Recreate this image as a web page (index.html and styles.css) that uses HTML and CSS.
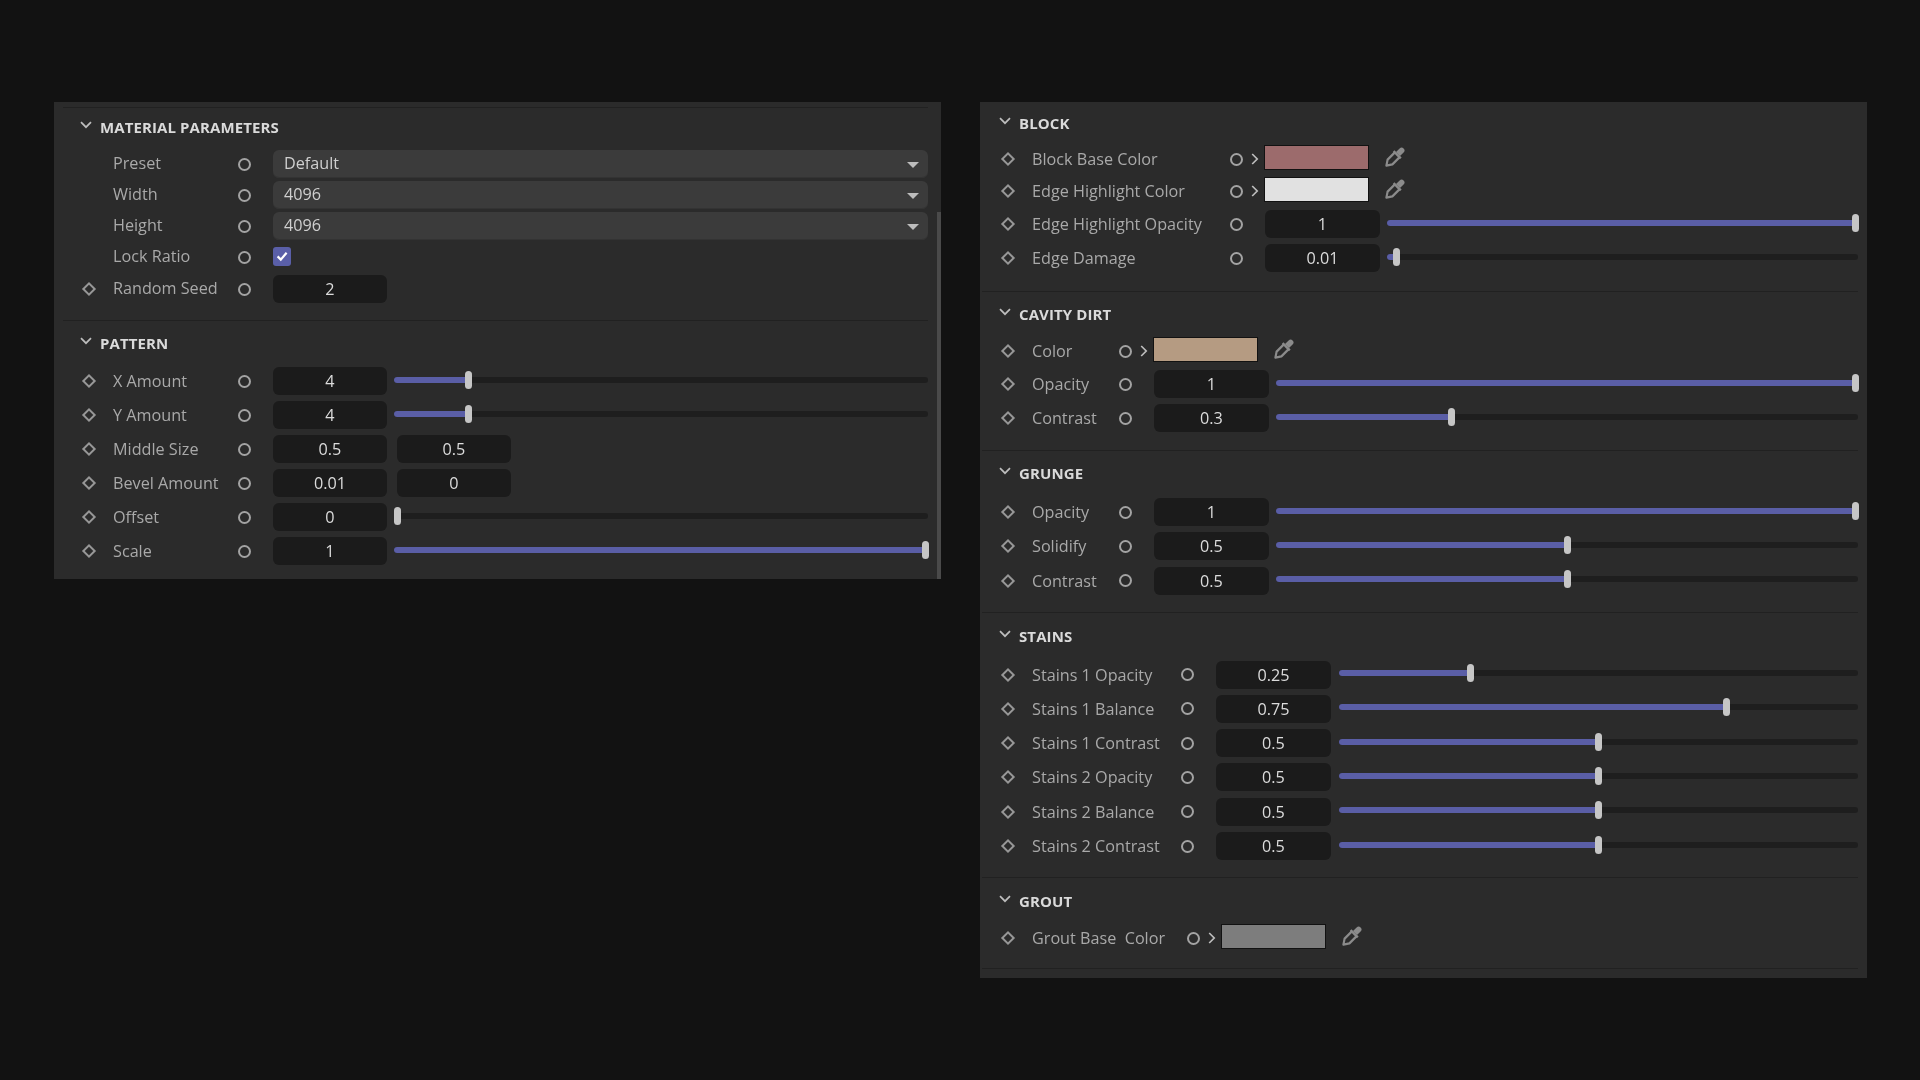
FILE: index.html
```html
<!DOCTYPE html>
<html lang="en">
<head>
<meta charset="utf-8">
<title>Material Parameters</title>
<link rel="stylesheet" href="styles.css">
</head>
<body>
<svg class="defs" width="0" height="0" aria-hidden="true">
  <symbol id="chev" viewBox="0 0 12 8"><path d="M1 1.2 6 6.2 11 1.2" fill="none" stroke="currentColor" stroke-width="1.7"/></symbol>
  <symbol id="drop" viewBox="0 0 20 20">
    <path d="M9.6 5.6 2.6 12.6 1.4 18.6 7.4 17.4 14.4 10.4" fill="none" stroke="currentColor" stroke-width="2.2" stroke-linejoin="round"/>
    <path d="M8.6 4.2 15.8 11.4" fill="none" stroke="currentColor" stroke-width="2.4"/>
    <path d="M11 5 14.6 1.4a2.8 2.8 0 0 1 4 4L15 9z" fill="currentColor"/>
  </symbol>
</svg>
<main class="stage">
  <section class="panel panel-left">
    <div class="section sec-material">
      <div class="head"><svg class="chev"><use href="#chev"/></svg><h2>Material Parameters</h2></div>
      <div class="rows rows-tight">
        <div class="row"><i class="dia off"></i><span class="label">Preset</span><i class="dot"></i><div class="select">Default<b class="caret"></b></div></div>
        <div class="row"><i class="dia off"></i><span class="label">Width</span><i class="dot"></i><div class="select">4096<b class="caret"></b></div></div>
        <div class="row"><i class="dia off"></i><span class="label">Height</span><i class="dot"></i><div class="select">4096<b class="caret"></b></div></div>
        <div class="row"><i class="dia off"></i><span class="label">Lock Ratio</span><i class="dot"></i><div class="check"><svg viewBox="0 0 18 18" width="18" height="18"><path d="M4.6 9.4 7.8 12.6 13.6 5.8" fill="none" stroke="#fff" stroke-width="2.2"/></svg></div></div>
        <div class="row row-seed"><i class="dia"></i><span class="label">Random Seed</span><i class="dot"></i><div class="field">2</div></div>
      </div>
    </div>
    <div class="section sec-pattern">
      <div class="head"><svg class="chev"><use href="#chev"/></svg><h2>Pattern</h2></div>
      <div class="rows">
        <div class="row"><i class="dia"></i><span class="label">X Amount</span><i class="dot"></i><div class="field">4</div><div class="slider" style="--v:.136"><u></u><s></s></div></div>
        <div class="row"><i class="dia"></i><span class="label">Y Amount</span><i class="dot"></i><div class="field">4</div><div class="slider" style="--v:.136"><u></u><s></s></div></div>
        <div class="row"><i class="dia"></i><span class="label">Middle Size</span><i class="dot"></i><div class="field">0.5</div><div class="field field-2">0.5</div></div>
        <div class="row"><i class="dia"></i><span class="label">Bevel Amount</span><i class="dot"></i><div class="field">0.01</div><div class="field field-2">0</div></div>
        <div class="row"><i class="dia"></i><span class="label">Offset</span><i class="dot"></i><div class="field">0</div><div class="slider" style="--v:0"><u></u><s></s></div></div>
        <div class="row"><i class="dia"></i><span class="label">Scale</span><i class="dot"></i><div class="field">1</div><div class="slider" style="--v:1"><u></u><s></s></div></div>
      </div>
    </div>
    <i class="scrollbar"></i>
  </section>

  <section class="panel panel-right">
    <div class="section sec-block">
      <div class="head"><svg class="chev"><use href="#chev"/></svg><h2>Block</h2></div>
      <div class="rows">
        <div class="row row-swatch"><i class="dia"></i><span class="label">Block Base Color</span><i class="dot"></i><svg class="more"><use href="#chev"/></svg><div class="swatch swatch-rose"></div><svg class="picker"><use href="#drop"/></svg></div>
        <div class="row row-swatch"><i class="dia"></i><span class="label">Edge Highlight Color</span><i class="dot"></i><svg class="more"><use href="#chev"/></svg><div class="swatch swatch-white"></div><svg class="picker"><use href="#drop"/></svg></div>
        <div class="row row-after-swatch"><i class="dia"></i><span class="label">Edge Highlight Opacity</span><i class="dot"></i><div class="field">1</div><div class="slider" style="--v:1"><u></u><s></s></div></div>
        <div class="row"><i class="dia"></i><span class="label">Edge Damage</span><i class="dot"></i><div class="field">0.01</div><div class="slider" style="--v:.013"><u></u><s></s></div></div>
      </div>
    </div>
    <div class="section sec-cavity">
      <div class="head"><svg class="chev"><use href="#chev"/></svg><h2>Cavity Dirt</h2></div>
      <div class="rows">
        <div class="row row-swatch"><i class="dia"></i><span class="label">Color</span><i class="dot"></i><svg class="more"><use href="#chev"/></svg><div class="swatch swatch-tan"></div><svg class="picker"><use href="#drop"/></svg></div>
        <div class="row row-after-swatch"><i class="dia"></i><span class="label">Opacity</span><i class="dot"></i><div class="field">1</div><div class="slider" style="--v:1"><u></u><s></s></div></div>
        <div class="row"><i class="dia"></i><span class="label">Contrast</span><i class="dot"></i><div class="field">0.3</div><div class="slider" style="--v:.3"><u></u><s></s></div></div>
      </div>
    </div>
    <div class="section sec-grunge">
      <div class="head"><svg class="chev"><use href="#chev"/></svg><h2>Grunge</h2></div>
      <div class="rows rows-wide">
        <div class="row"><i class="dia"></i><span class="label">Opacity</span><i class="dot"></i><div class="field">1</div><div class="slider" style="--v:1"><u></u><s></s></div></div>
        <div class="row"><i class="dia"></i><span class="label">Solidify</span><i class="dot"></i><div class="field">0.5</div><div class="slider" style="--v:.5"><u></u><s></s></div></div>
        <div class="row"><i class="dia"></i><span class="label">Contrast</span><i class="dot"></i><div class="field">0.5</div><div class="slider" style="--v:.5"><u></u><s></s></div></div>
      </div>
    </div>
    <div class="section sec-stains">
      <div class="head"><svg class="chev"><use href="#chev"/></svg><h2>Stains</h2></div>
      <div class="rows rows-wide">
        <div class="row"><i class="dia"></i><span class="label">Stains 1 Opacity</span><i class="dot"></i><div class="field">0.25</div><div class="slider" style="--v:.25"><u></u><s></s></div></div>
        <div class="row"><i class="dia"></i><span class="label">Stains 1 Balance</span><i class="dot"></i><div class="field">0.75</div><div class="slider" style="--v:.75"><u></u><s></s></div></div>
        <div class="row"><i class="dia"></i><span class="label">Stains 1 Contrast</span><i class="dot"></i><div class="field">0.5</div><div class="slider" style="--v:.5"><u></u><s></s></div></div>
        <div class="row"><i class="dia"></i><span class="label">Stains 2 Opacity</span><i class="dot"></i><div class="field">0.5</div><div class="slider" style="--v:.5"><u></u><s></s></div></div>
        <div class="row"><i class="dia"></i><span class="label">Stains 2 Balance</span><i class="dot"></i><div class="field">0.5</div><div class="slider" style="--v:.5"><u></u><s></s></div></div>
        <div class="row"><i class="dia"></i><span class="label">Stains 2 Contrast</span><i class="dot"></i><div class="field">0.5</div><div class="slider" style="--v:.5"><u></u><s></s></div></div>
      </div>
    </div>
    <div class="section sec-grout">
      <div class="head"><svg class="chev"><use href="#chev"/></svg><h2>Grout</h2></div>
      <div class="rows">
        <div class="row row-swatch"><i class="dia"></i><span class="label">Grout Base&nbsp; Color</span><i class="dot"></i><svg class="more"><use href="#chev"/></svg><div class="swatch swatch-grey"></div><svg class="picker"><use href="#drop"/></svg></div>
      </div>
    </div>
    <div class="section sec-end"></div>
  </section>
</main>
</body>
</html>
```
FILE: styles.css
```css
* { box-sizing: border-box; }
html, body { margin: 0; height: 100%; }
body {
  background: #121212;
  color: #a9a9a9;
  font-family: "Open Sans", "Noto Sans", "Liberation Sans", sans-serif;
  font-size: 16.2px;
  overflow: hidden;
}
.defs { position: absolute; }
.stage {
  display: flex;
  align-items: flex-start;
  gap: 39px;
  padding: 102px 0 0 54px;
  filter: blur(0.4px);
}
.panel {
  position: relative;
  width: 887px;
  background: #2b2b2b;
}
.panel-left { height: 477px; padding: 5px 13px 0 9px; }
.panel-right { height: 876px; padding: 0 9px 0 2px; }
.scrollbar {
  position: absolute;
  top: 110px;
  right: 0;
  bottom: 0;
  width: 4px;
  background: #4a4a4a;
}

/* sections */
.section { --label: 125px; border-top: 1px solid #212121; padding: 3px 0 18px; }
.sec-material { padding: 0 0 17px; }
.sec-material .head { margin-bottom: 4px; }
.sec-material .label { line-height: 27.5px; }
.sec-pattern { padding-bottom: 14px; }
.sec-pattern .head { margin-bottom: 5px; }
.sec-block { --label: 198px; border-top: 0; padding: 2px 0 19px; }
.sec-block .head { margin-bottom: 3px; }
.sec-cavity { --label: 87px; }
.sec-cavity .head { margin-bottom: 4px; }
.sec-grunge { --label: 87px; padding-bottom: 17px; }
.sec-stains { --label: 149px; padding: 4px 0 17px; }
.sec-stains .slider { margin-left: 8px; }
.sec-grout { --label: 155px; padding: 4px 0 18px; }
.sec-grout .head { margin-bottom: 4px; }
.sec-end { padding: 0; }

.head {
  display: flex;
  align-items: center;
  gap: 8px;
  height: 38px;
  margin-bottom: 6px;
  padding-left: 17px;
}
.head h2 {
  margin: 0;
  font-size: 15px;
  font-weight: 700;
  letter-spacing: 0.1px;
  text-transform: uppercase;
  color: #dadada;
}
.chev { width: 12px; height: 8px; margin-bottom: 4px; color: #bdbdbd; }

/* rows */
.rows { display: flex; flex-direction: column; gap: 6px; }
.rows-tight { gap: 3px; }
.rows-wide { gap: 6.3px; }
.row {
  display: flex;
  align-items: center;
  height: 28px;
  padding-left: 19px;
}
.row-seed { margin-top: 1px; }
.row-swatch { margin-bottom: -2px; }
.row-after-swatch { margin-top: 1px; }
.dia {
  flex: none;
  width: 14px;
  height: 14px;
  position: relative;
}
.dia::before {
  content: "";
  position: absolute;
  inset: 2px;
  border: 2px solid #979797;
  transform: rotate(45deg);
}
.dia.off::before { display: none; }
.label {
  flex: none;
  width: var(--label);
  margin-left: 17px;
  line-height: 29.5px;
  height: 28px;
  white-space: nowrap;
}
.dot {
  flex: none;
  width: 13px;
  height: 13px;
  margin-right: 22px;
  border: 2px solid #a3a3a3;
  border-radius: 50%;
}

/* controls */
.field {
  flex: none;
  width: 115px;
  height: 28px;
  line-height: 29px;
  border-radius: 6px;
  background: #1b1b1b;
  color: #dcdcdc;
  text-align: center;
}
.panel-left .field { width: 114px; }
.field-2 { margin-left: 10px; }
.select {
  flex: 1;
  position: relative;
  height: 28px;
  line-height: 26px;
  padding-left: 11px;
  border-radius: 6px;
  background: #3b3b3b;
  box-shadow: inset 0 -1px 0 #333;
  color: #cfcfcf;
}
.caret {
  position: absolute;
  top: 12px;
  right: 9px;
  border-style: solid;
  border-width: 6px 6px 0;
  border-color: #bcbcbc transparent transparent;
}
.check {
  width: 18px;
  height: 19px;
  margin-top: -1px;
  border-radius: 3px;
  background: #5a5fa8;
}
.check svg { display: block; }
.slider {
  flex: 1;
  position: relative;
  height: 6px;
  margin: -3px 0 0 7px;
  border-radius: 3px;
  background: #1e1e1e;
}
.slider u {
  position: absolute;
  inset: 0 auto 0 0;
  width: calc(3px + (100% - 6px) * var(--v));
  border-radius: 3px;
  background: #5a5ea6;
}
.slider s {
  position: absolute;
  top: -6px;
  left: calc((100% - 6px) * var(--v) - 0.5px);
  width: 7px;
  height: 18px;
  border-radius: 4px;
  background: #c6c6c6;
}
.more {
  flex: none;
  width: 12px;
  height: 8px;
  margin-left: -16px;
  margin-right: 2.5px;
  color: #bdbdbd;
  transform: rotate(-90deg);
}
.swatch {
  flex: none;
  align-self: flex-start;
  width: 105px;
  height: 25px;
  border: 1px solid #121212;
}
.swatch-rose { background: #9c6b6c; }
.swatch-white { background: #e1e1e1; }
.swatch-tan { background: #b59b82; }
.swatch-grey { background: #7d7d7d; }
.picker {
  flex: none;
  align-self: flex-start;
  width: 20px;
  height: 20px;
  margin: 2px 0 0 16px;
  color: #8b8b8b;
}
```
